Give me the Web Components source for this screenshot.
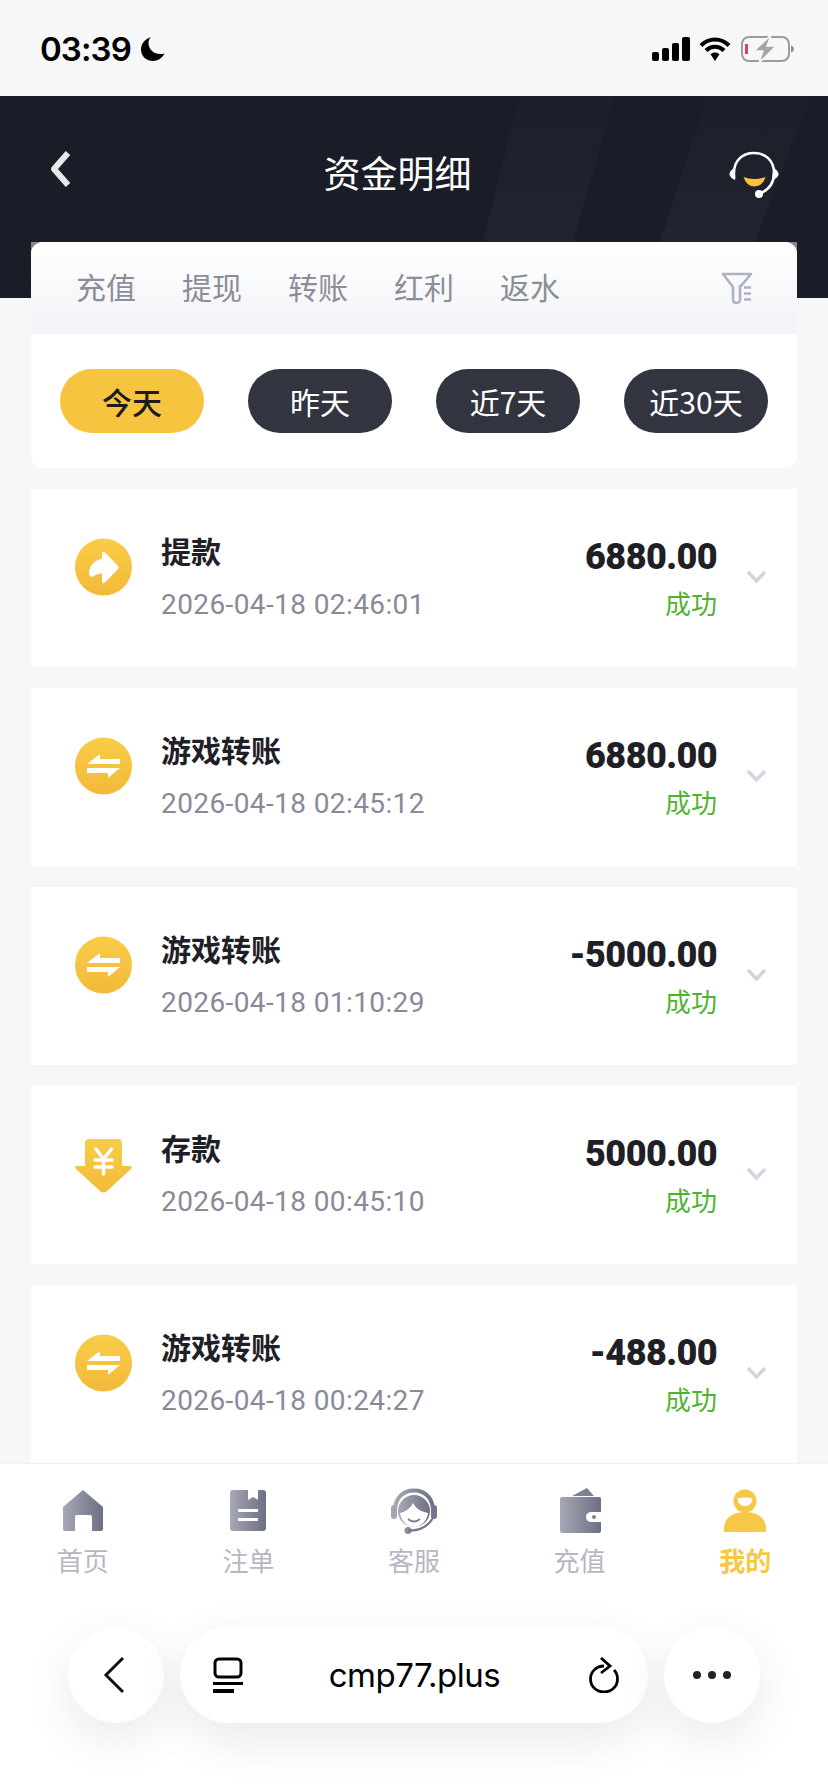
<!DOCTYPE html>
<html lang="zh-CN">
<head>
  <meta charset="UTF-8">
  <meta name="viewport" content="width=device-width, initial-scale=1.0">
  <title>资金明细</title>
  <style>
    html, body{
      margin: 0;
      padding: 0;
      background: #fff;
    }
    body{
      font-family: "Noto Sans CJK SC", "Liberation Sans", sans-serif;
    }
  </style>
</head>
<body>
  <app-shell>
    <status-bar slot="top" time="03:39"></status-bar>
    <page-header slot="top">资金明细</page-header>

    <filter-card>
      <span slot="tabs">充值</span>
      <span slot="tabs">提现</span>
      <span slot="tabs">转账</span>
      <span slot="tabs">红利</span>
      <span slot="tabs">返水</span>
      <date-pill slot="dates" active>今天</date-pill>
      <date-pill slot="dates">昨天</date-pill>
      <date-pill slot="dates">近7天</date-pill>
      <date-pill slot="dates">近30天</date-pill>
    </filter-card>

    <record-row kind="out" title="提款" time="2026-04-18 02:46:01" amount="6880.00" state="成功"></record-row>
    <record-row kind="swap" title="游戏转账" time="2026-04-18 02:45:12" amount="6880.00" state="成功"></record-row>
    <record-row kind="swap" title="游戏转账" time="2026-04-18 01:10:29" amount="-5000.00" state="成功"></record-row>
    <record-row kind="in" title="存款" time="2026-04-18 00:45:10" amount="5000.00" state="成功"></record-row>
    <record-row kind="swap" title="游戏转账" time="2026-04-18 00:24:27" amount="-488.00" state="成功"></record-row>

    <tab-bar slot="bottom">
      <tab-item icon="home">首页</tab-item>
      <tab-item icon="book">注单</tab-item>
      <tab-item icon="service">客服</tab-item>
      <tab-item icon="wallet">充值</tab-item>
      <tab-item icon="me" active>我的</tab-item>
    </tab-bar>
    <browser-bar slot="bottom" url="cmp77.plus"></browser-bar>
  </app-shell>

<script>
    const CJK = '"Noto Sans CJK SC", "Liberation Sans", sans-serif';

    class AppShell extends HTMLElement {
      constructor() {
        super();
        this.attachShadow({ mode: 'open' });
        this.shadowRoot.innerHTML = `
          <style>
            :host{
              display: flex;
              flex-direction: column;
              width: 828px;
              height: 1792px;
              overflow: hidden;
              background: #f7f7f7;
            }
            .scroll{
              flex: 1;
              min-height: 0;
              overflow: hidden;
              display: flex;
              flex-direction: column;
              gap: 21px;
              padding: 0 31px;
              margin-top: -56px;
              position: relative;
            }
          </style>
          <slot name="top"></slot>
          <div class="scroll"><slot></slot></div>
          <slot name="bottom"></slot>
        `;
      }
    }

    class StatusBar extends HTMLElement {
      constructor() {
        super();
        this.attachShadow({ mode: 'open' });
        this.shadowRoot.innerHTML = `
          <style>
            :host{
              display: flex;
              align-items: center;
              justify-content: space-between;
              height: 96px;
              box-sizing: border-box;
              padding: 2px 34px 0 40px;
              background: #f7f7f7;
              color: #000;
            }
            .left, .right{ display: flex; align-items: center; }
            .left{ gap: 9px; }
            .time{ font: 600 33px/1 Inter, "Liberation Sans", sans-serif; letter-spacing: -0.9px; }
            .right{ gap: 9px; }
            svg{ display: block; }
          </style>
          <div class="left">
            <span class="time">${this.getAttribute('time')}</span>
            <svg width="26" height="26" viewBox="0 0 26 26"><path d="M11 1C4.500 3 1 8 1 13.500 1 20 6.200 25 12.800 25c5.200 0 9.600-3 11.700-7.500-1.300.4-2.600.6-4 .6C13.500 18.100 8.500 13 8.500 7 8.500 4.800 9.400 2.600 11 1z" fill="#000"/></svg>
          </div>
          <div class="right">
            <svg width="38" height="24" viewBox="0 0 38 24" fill="#000">
              <rect x="0" y="15" width="7" height="9" rx="2"/>
              <rect x="10" y="11" width="7" height="13" rx="2"/>
              <rect x="20" y="6" width="7" height="18" rx="2"/>
              <rect x="30" y="0" width="8" height="24" rx="2"/>
            </svg>
            <svg width="32" height="24" viewBox="0 0 32 24">
              <path d="M2 8.500C10 .5 22 .5 30 8.500M7 13.500c5.200-5 12.800-5 18 0" fill="none" stroke="#000" stroke-width="4.200"/>
              <path d="M11.500 17.200c2.800-2.300 6.200-2.300 9 0L16 24z" fill="#000"/>
            </svg>
            <svg width="53" height="26" viewBox="0 0 53 26" style="margin-left:1px">
              <rect x="1" y="1" width="47" height="24" rx="7" fill="none" stroke="#9c9c9c" stroke-width="2"/>
              <rect x="4" y="8" width="3" height="10" fill="#e8404a"/>
              <path d="M50 9.500c1.800.6 3 2 3 3.500s-1.200 2.900-3 3.500z" fill="#8f8f8f"/>
              <path d="M30 -1 13 15h9l-4 12 17-17h-9z" fill="#a4a4a4" stroke="#f7f7f7" stroke-width="1.500"/>
            </svg>
          </div>
        `;
      }
    }

    class PageHeader extends HTMLElement {
      constructor() {
        super();
        this.attachShadow({ mode: 'open' });
        this.shadowRoot.innerHTML = `
          <style>
            :host{
              display: block;
              position: relative;
              height: 202px;
              background: #1a1d27;
              overflow: hidden;
            }
            .stripes{ position: absolute; inset: 0; }
            .bar{
              position: relative;
              display: flex;
              align-items: center;
              justify-content: space-between;
              box-sizing: border-box;
              height: 146px;
              padding: 0 49px 0 49px;
            }
            .title{
              color: #fff;
              font: 400 37px/1 ${CJK};
              margin: 7px 7px 0 0;
            }
            svg{ display: block; }
          </style>
          <svg class="stripes" width="828" height="202" viewBox="0 0 828 202">
            <defs>
              <linearGradient id="s" x1="0" y1="0" x2="0" y2="1"><stop offset="0" stop-color="#1c1f29"/><stop offset="1" stop-color="#21242e"/></linearGradient>
            </defs>
            <polygon points="520,0 615,0 573,146 483,146" fill="url(#s)"/>
            <polygon points="707,0 810,0 755,146 660,146" fill="url(#s)"/>
          </svg>
          <div class="bar">
            <svg width="24" height="38" viewBox="0 0 24 38"><path d="M19 3 5 19l14 16" fill="none" stroke="#e8e8e8" stroke-width="6" stroke-linejoin="round"/></svg>
            <span class="title"><slot></slot></span>
            <svg width="50" height="48" viewBox="0 0 50 48" style="margin:11px 0 0 0">
              <path d="M5 22C5 9 14 2 25 2s20 7 20 20c0 10-5 17-15 21" fill="none" stroke="#fff" stroke-width="2.600"/>
              <path d="M5 17C2 19 0 22 .5 24c1 2 3 4 5.500 5 1-4 0-8-1-12zM45 17c3 2 5 5 4.500 7-1 2-3 4-5.500 5-1-4 0-8 1-12z" fill="#fff"/>
              <circle cx="30" cy="43" r="4" fill="#fff"/>
              <path d="M14.500 26Q25 30 36.500 26 33.500 35.500 25.500 35.500 17.500 35.500 14.500 26Z" fill="#f6c13c"/>
            </svg>
          </div>
        `;
      }
    }

    class FilterCard extends HTMLElement {
      constructor() {
        super();
        this.attachShadow({ mode: 'open' });
        this.shadowRoot.innerHTML = `
          <style>
            :host{
              display: block;
              flex: none;
              background: linear-gradient(#85868b 0, #85868b 12px, transparent 12px);
            }
            .card{
              background: #fff;
              border-radius: 12px;
              overflow: hidden;
            }
            .tabs{
              display: flex;
              align-items: center;
              justify-content: space-between;
              height: 92px;
              box-sizing: border-box;
              padding: 0 44px 0 45px;
              background: linear-gradient(#ffffff, #f2f3f7);
            }
            .labels{
              display: flex;
              gap: 46px;
              color: #8b8d99;
              font: 400 30px/1 ${CJK};
              margin-top: -4px;
            }
            .dates{
              display: flex;
              justify-content: space-between;
              padding: 35px 29px;
            }
            svg{ display: block; }
          </style>
          <div class="card">
            <div class="tabs">
              <div class="labels"><slot name="tabs"></slot></div>
              <svg width="32" height="33" viewBox="0 0 32 33" fill="none" stroke="#aeb1c4" stroke-width="2.600" stroke-linejoin="round" stroke-linecap="round">
                <path d="M2 2h28l-10 12v-0.500M2 2l10 13v13c0 2 2 3 3.500 3 1.500 0 3-.8 3.500-2.500V14"/>
                <path d="M23 15.500h7M23 21.500h7M23 27.500h7" stroke-linecap="butt"/>
              </svg>
            </div>
            <div class="dates"><slot name="dates"></slot></div>
          </div>
        `;
      }
    }

    class DatePill extends HTMLElement {
      constructor() {
        super();
        this.attachShadow({ mode: 'open' });
        this.shadowRoot.innerHTML = `
          <style>
            :host{
              display: flex;
              align-items: center;
              justify-content: center;
              width: 144px;
              height: 64px;
              border-radius: 32px;
              background: #32343f;
              color: #fff;
              font: 400 30px/1 ${CJK};
            }
            :host([active]){
              background: #f6c43f;
              color: #1c1c1e;
              font-weight: 500;
            }
          </style>
          <slot></slot>
        `;
      }
    }

    const kindIcons = {
      out: `<circle cx="28.500" cy="29" r="28.500" fill="url(#g)"/>
            <path d="M27 16Q27 12 30.500 15L42.500 27.500Q44.500 29.500 42.500 31.500L30.500 44Q27 47 27 43V35.500C23 35.500 21 36.500 19 38Q15 40.500 14 36C14 27 20 22 27 21Z" fill="#fff"/>`,
      swap: `<circle cx="28.500" cy="29" r="28.500" fill="url(#g)"/>
            <path d="M12 27 25 17V22H45V27ZM45 31 33 41V36H12V31Z" fill="#fff"/>`,
      in: `<g transform="translate(0 4)">
             <path d="M10 4Q10 0 14 0H43Q47 0 47 4V27H55Q58 27 56 30L32 52Q28.500 55 25 52L1 30Q-1 27 2 27H10Z" fill="url(#g)"/>
             <path d="M21 10l7.500 10 8-10M28.500 20V35M20 21H37M20 28H37" fill="none" stroke="#fff" stroke-width="3.500" stroke-linecap="round"/>
           </g>`
    };

    class RecordRow extends HTMLElement {
      constructor() {
        super();
        this.attachShadow({ mode: 'open' });
        const kind = this.getAttribute('kind');
        this.shadowRoot.innerHTML = `
          <style>
            :host{
              display: flex;
              flex: none;
              align-items: flex-start;
              height: 178px;
              box-sizing: border-box;
              padding: 49px 30px 0 44px;
              background: #fff;
            }
            .icon{ display: block; flex: none; margin-right: 28px; overflow: visible; }
            .main{ flex: 1; min-width: 0; margin-top: -8px; }
            .title{
              color: #1f2026;
              font: 700 30px/40px ${CJK};
            }
            .time{
              margin-top: 17px;
              color: #888a98;
              font: 400 28px/36px Roboto, ${CJK};
              letter-spacing: 0.4px;
            }
            .side{ text-align: right; margin-top: -1px; }
            .amount{
              color: #1f2026;
              font: 900 36px/40px Roboto, "Liberation Sans", sans-serif;
              letter-spacing: -0.6px;
            }
            .state{
              margin-top: 8px;
              color: #4fb32f;
              font: 400 26px/36px ${CJK};
            }
            .chev{ display: block; flex: none; margin: 32px 0 0 29px; }
          </style>
          <svg class="icon" width="58" height="58" viewBox="0 0 58 58">
            <defs><linearGradient id="g" x1="0" y1="0" x2="0" y2="1"><stop offset="0" stop-color="#f8cd48"/><stop offset="1" stop-color="#f4b93a"/></linearGradient></defs>
            ${kindIcons[kind]}
          </svg>
          <div class="main">
            <div class="title">${this.getAttribute('title')}</div>
            <div class="time">${this.getAttribute('time')}</div>
          </div>
          <div class="side">
            <div class="amount">${this.getAttribute('amount')}</div>
            <div class="state">${this.getAttribute('state')}</div>
          </div>
          <svg class="chev" width="21" height="14" viewBox="0 0 21 14"><path d="M2 2l8.500 9L19 2" fill="none" stroke="#d3d4df" stroke-width="3.500"/></svg>
        `;
      }
    }

    class TabBar extends HTMLElement {
      constructor() {
        super();
        this.attachShadow({ mode: 'open' });
        this.shadowRoot.innerHTML = `
          <style>
            :host{
              display: grid;
              grid-template-columns: repeat(5, 1fr);
              height: 130px;
              box-sizing: border-box;
              padding-top: 24px;
              background: #fff;
              border-top: 1px solid #f0f0f2;
              position: relative;
            }
          </style>
          <slot></slot>
        `;
      }
    }

    const navIcons = {
      home: `<path d="M20 0 40 17V39Q40 41 38 41H29V27Q29 25 27 25H14Q12 25 12 27V41H2Q0 41 0 39V17Z" fill="url(#n)" transform="translate(3 2)"/>`,
      book: `<path fill-rule="evenodd" d="M8 2H23V12L28 9 33 12V2H38Q41 2 41 5V40Q41 43 38 43H8Q5 43 5 40V5Q5 2 8 2ZM13 21V24H33V21ZM13 30V33H33V30Z" fill="url(#n)"/>`,
      service: `<path d="M4 23C4 10 12 2.500 23 2.500S42 10 42 23" fill="none" stroke="url(#n)" stroke-width="4"/>
                <rect x="0" y="17" width="6" height="14" rx="3" fill="#a3a5b4"/>
                <rect x="40" y="17" width="6" height="14" rx="3" fill="#73758a"/>
                <circle cx="23" cy="23" r="16" fill="url(#n)"/>
                <path d="M9 25C14 24 20 20 22 15 25 21 31 24 37 25 36 33 30 39 23 39S10 33 9 25Z" fill="#fff"/>
                <path d="M17 31Q23 36 29 31" fill="none" stroke="#7e8093" stroke-width="2"/>
                <circle cx="17" cy="42.500" r="3.500" fill="#8a8c9d"/>
                <path d="M17 42.500C27 43 36 40 42 30" fill="none" stroke="#73758a" stroke-width="2.200"/>`,
      wallet: `<path d="M15 8 30 0 37 8Z" fill="#7f8195"/>
               <path d="M3 11Q3 9 5 9H42Q44 9 44 11V24H35Q29 24 29 29T35 34H44V43Q44 45 42 45H5Q3 45 3 43Z" fill="url(#n)"/>
               <circle cx="37" cy="29" r="2" fill="#7f8195"/>`,
      me: `<circle cx="23" cy="13" r="11.500" fill="#f6c843"/>
           <path d="M15.500 10.500Q23 8.500 30.500 10.500 30 18 23 18T15.500 10.500Z" fill="#fff"/>
           <path d="M3 44Q1 44 2.500 37C4 29 12 24 23 24s19 5 20.500 13Q45 44 43 44Z" fill="#f6c843"/>`
    };

    class TabItem extends HTMLElement {
      constructor() {
        super();
        this.attachShadow({ mode: 'open' });
        this.shadowRoot.innerHTML = `
          <style>
            :host{
              display: flex;
              flex-direction: column;
              align-items: center;
              color: #b6b7c3;
              font: 400 26px/32px ${CJK};
            }
            :host([active]){
              color: #f6c843;
              font-weight: 700;
            }
            svg{ display: block; margin-bottom: 10px; }
          </style>
          <svg width="46" height="46" viewBox="0 0 46 46">
            <defs><linearGradient id="n" x1="0" y1="0" x2="1" y2="0"><stop offset="0" stop-color="#a6a8b6"/><stop offset="1" stop-color="#6d6f83"/></linearGradient></defs>
            ${navIcons[this.getAttribute('icon')]}
          </svg>
          <slot></slot>
        `;
      }
    }

    class BrowserBar extends HTMLElement {
      constructor() {
        super();
        this.attachShadow({ mode: 'open' });
        this.shadowRoot.innerHTML = `
          <style>
            :host{
              display: flex;
              justify-content: center;
              gap: 16px;
              height: 199px;
              box-sizing: border-box;
              padding-top: 34px;
              background: #fff;
            }
            .pill{
              display: flex;
              align-items: center;
              justify-content: center;
              height: 96px;
              border-radius: 48px;
              background: #fff;
              box-shadow: 0 16px 50px rgba(0, 0, 0, 0.09);
            }
            .round{ width: 96px; }
            .url{
              width: 468px;
              box-sizing: border-box;
              padding: 0 29px 0 33px;
              justify-content: space-between;
              color: #000;
              font: 400 33px/1 Inter, "Liberation Sans", Arial, sans-serif;
              letter-spacing: -0.5px;
            }
            .url span{ margin-right: 3px; }
            svg{ display: block; }
            .chev{ margin-right: 4px; }
          </style>
          <div class="pill round">
            <svg class="chev" width="24" height="38" viewBox="0 0 24 38"><path d="M21 2 4 19l17 17" fill="none" stroke="#111" stroke-width="3"/></svg>
          </div>
          <div class="pill url">
            <svg width="30" height="36" viewBox="0 0 30 36" fill="none" stroke="#000">
              <rect x="2" y="2" width="26" height="18" rx="4" stroke-width="3"/>
              <path d="M0 26.500H30" stroke-width="3"/>
              <path d="M0 34H21" stroke-width="4"/>
            </svg>
            <span>${this.getAttribute('url')}</span>
            <svg width="30" height="36" viewBox="0 0 30 36" fill="none" stroke="#000" stroke-width="2.800">
              <path d="M15 9C7 9 1.500 15 1.500 22 1.500 29.500 7.500 35 15 35S28.500 29.500 28.500 22C28.500 18 27 15 25 13"/>
              <path d="M12 1l9 8-9 7"/>
            </svg>
          </div>
          <div class="pill round">
            <svg width="40" height="10" viewBox="0 0 40 10" fill="#222"><circle cx="5" cy="5" r="4"/><circle cx="20" cy="5" r="4"/><circle cx="35" cy="5" r="4"/></svg>
          </div>
        `;
      }
    }

    customElements.define('app-shell', AppShell);
    customElements.define('status-bar', StatusBar);
    customElements.define('page-header', PageHeader);
    customElements.define('filter-card', FilterCard);
    customElements.define('date-pill', DatePill);
    customElements.define('record-row', RecordRow);
    customElements.define('tab-bar', TabBar);
    customElements.define('tab-item', TabItem);
    customElements.define('browser-bar', BrowserBar);
  </script>
</body>
</html>
